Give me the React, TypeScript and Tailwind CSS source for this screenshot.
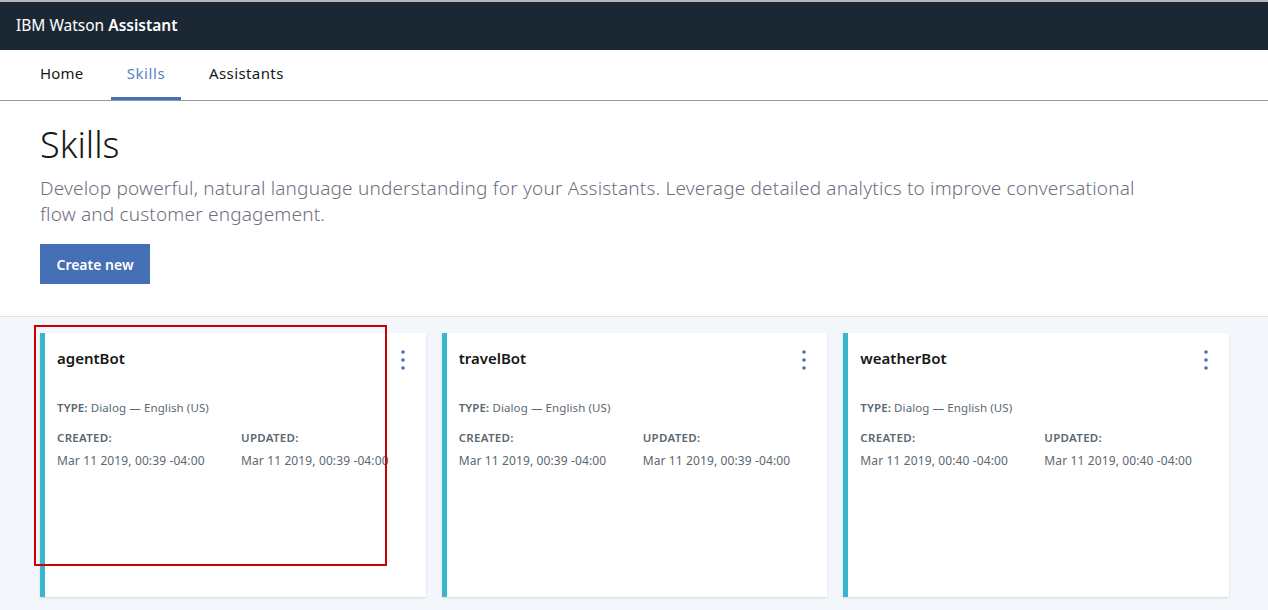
import React from "react";

const font = { fontFamily: '"Noto Sans", "Open Sans", sans-serif' };

const skills = [
    { name: "agentBot", created: "Mar 11 2019, 00:39 -04:00", updated: "Mar 11 2019, 00:39 -04:00" },
    { name: "travelBot", created: "Mar 11 2019, 00:39 -04:00", updated: "Mar 11 2019, 00:39 -04:00" },
    { name: "weatherBot", created: "Mar 11 2019, 00:40 -04:00", updated: "Mar 11 2019, 00:40 -04:00" },
];

const Kebab = () => (
    <svg width="4" height="20" viewBox="0 0 4 20" className="mt-[3px]">
        <circle cx="2" cy="2" r="1.8" fill="#4a6fb5" />
        <circle cx="2" cy="10" r="1.8" fill="#4a6fb5" />
        <circle cx="2" cy="18" r="1.8" fill="#4a6fb5" />
    </svg>
);

const SkillCard = (props: { name: string; created: string; updated: string }) => {
    return (
        <div className="h-[264px] bg-white border-l-[5px] border-[#3ab6cc] shadow-[0_1px_2px_rgba(0,0,0,0.12)] pl-[12px] pr-[21px] pt-[14px]">
            <div className="flex justify-between items-start">
                <h3 className="text-[15px] font-semibold text-[#171717] leading-[22px]">{props.name}</h3>
                <Kebab />
            </div>
            <div className="mt-[30px] text-[11.5px] text-[#5a6872] leading-[16px] tracking-[0.1px]">
                <span className="font-semibold">TYPE:</span> Dialog — English (US)
            </div>
            <div className="grid grid-cols-[184px_1fr] mt-[14px] text-[11.5px] text-[#5a6872] leading-[16px] tracking-[0.1px]">
                <div>
                    <div className="font-semibold tracking-[0.3px]">CREATED:</div>
                    <div className="mt-[7px] whitespace-nowrap text-[12px] tracking-[0.12px]">{props.created}</div>
                </div>
                <div>
                    <div className="font-semibold tracking-[0.3px]">UPDATED:</div>
                    <div className="mt-[7px] whitespace-nowrap text-[12px] tracking-[0.12px]">{props.updated}</div>
                </div>
            </div>
        </div>
    );
};

export default function App() {
    return (
        <div className="w-[1268px] h-[610px] overflow-hidden bg-[#f3f6fa] relative" style={font}>
            <div className="h-[2px] bg-[#b8b8b8]" />
            <div className="h-[48px] bg-[#1b2834] flex items-center px-[16px] text-white text-[15.5px] pb-[1px]">
                IBM Watson&nbsp;<span className="font-semibold">Assistant</span>
            </div>
            <nav className="h-[51px] bg-white border-b border-[#8c9ba5] flex items-stretch pl-[24px] text-[15px] tracking-[0.2px]">
                <div className="w-[87px] pl-[16px] pb-[4px] flex items-center text-[#171717]">Home</div>
                <div className="w-[70px] flex items-center justify-center text-[#5b7fc0] border-b-[3px] border-[#4a6fb5] pb-[1px] tracking-[0.6px]">Skills</div>
                <div className="ml-[12px] pl-[16px] pb-[4px] flex items-center text-[#171717] tracking-[0.4px]">Assistants</div>
            </nav>
            <section className="bg-white px-[40px] pt-[22px] pb-[32px] border-b border-[#dfe3e8]">
                <h1 className="text-[36px] font-light text-[#171717] leading-[44px]">Skills</h1>
                <p className="mt-[8px] text-[19px] font-light text-[#6f6f7f] leading-[26px] max-w-[1120px] tracking-[0.18px]">
                    Develop powerful, natural language understanding for your Assistants. Leverage detailed analytics to improve conversational flow and customer engagement.
                </p>
                <button className="mt-[17px] h-[40px] w-[110px] bg-[#4670b5] text-white text-[14px] font-semibold">
                    Create new
                </button>
            </section>
            <div className="grid grid-cols-3 gap-[16px] pl-[40px] pr-[39px] pt-[16px]">
                {skills.map((s) => (
                    <SkillCard key={s.name} {...s} />
                ))}
            </div>
            <div className="absolute left-[34px] top-[325px] w-[353px] h-[241px] border-2 border-[#cc0000] pointer-events-none" />
        </div>
    );
}
